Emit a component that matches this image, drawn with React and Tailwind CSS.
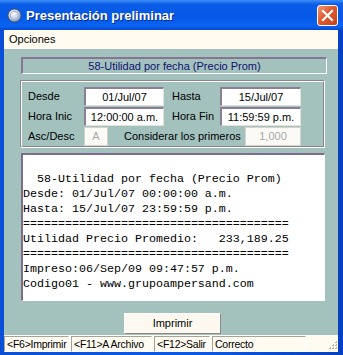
import React from "react";

const sunkenInput =
  "h-[19px] flex items-center justify-center bg-white border-t-2 border-l-2 border-r border-b border-t-[#8b7f96] border-l-[#8b7f96] border-r-[#e4e1da] border-b-[#e4e1da] text-[11px] text-black";
const disabledInput =
  "h-[19px] flex items-center justify-center bg-[#fbfaf6] border border-[#d6d3cb] text-[11px] text-[#a8a8a8]";

function Label({ w, children, cls = "" }) {
  return <div className={`text-[11px] text-black leading-none ${w} ${cls}`}>{children}</div>;
}

function StatusPanel({ w, children }) {
  return (
    <div className={`${w} h-full flex items-center pl-[2px] border-t border-l border-t-[#a5a39d] border-l-[#a5a39d] border-r border-b border-r-white border-b-white text-[10.5px] tracking-[-0.25px] leading-none whitespace-nowrap overflow-hidden`}>
      {children}
    </div>
  );
}

export default function App() {
  const lines = [
    "",
    "  58-Utilidad por fecha (Precio Prom)",
    "Desde: 01/Jul/07 00:00:00 a.m.",
    "Hasta: 15/Jul/07 23:59:59 p.m.",
    "======================================",
    "Utilidad Precio Promedio:   233,189.25",
    "======================================",
    "Impreso:06/Sep/09 09:47:57 p.m.",
    "Codigo01 - www.grupoampersand.com",
  ];
  return (
    <div className="w-[343px] h-[355px] flex flex-col overflow-hidden bg-[linear-gradient(90deg,#0a4fd6,#0a58e8_40%,#0a58e8_60%,#0640c0)] font-['Liberation_Sans',Arial,sans-serif]">
      {/* Title bar */}
      <div className="h-[30px] shrink-0 flex items-center bg-[linear-gradient(180deg,#3d8ef6_0%,#0b5de8_14%,#0558e6_55%,#0a63f2_86%,#0449d2_100%)]">
        <div className="ml-[7px] w-[15px] h-[15px]">
          <svg width="15" height="15" viewBox="0 0 15 15">
            <defs>
              <radialGradient id="orb" cx="0.4" cy="0.35" r="0.7">
                <stop offset="0" stopColor="#ffffff" />
                <stop offset="0.5" stopColor="#c9d4e6" />
                <stop offset="1" stopColor="#7e93bb" />
              </radialGradient>
            </defs>
            <circle cx="7.5" cy="7.5" r="6.6" fill="url(#orb)" stroke="#3e4f78" strokeWidth="1" />
            <circle cx="7.5" cy="7.5" r="4.2" fill="none" stroke="#9fb0cf" strokeWidth="1" />
          </svg>
        </div>
        <div className="ml-[4px] text-white font-bold text-[13px] leading-none [text-shadow:1px_1px_0_#0a2a8a] whitespace-nowrap">
          Presentación preliminar
        </div>
        <div className="ml-auto mr-[5px] w-[21px] h-[21px] rounded-[3px] border border-white bg-[linear-gradient(135deg,#f09878,#e05a30_45%,#c8401a)] flex items-center justify-center">
          <svg width="13" height="13" viewBox="0 0 13 13">
            <path d="M2 2 L11 11 M11 2 L2 11" stroke="white" strokeWidth="2.2" strokeLinecap="square" />
          </svg>
        </div>
      </div>

      {/* Client area */}
      <div className="flex-1 flex flex-col ml-[4px] mr-[5px] mb-[3px] bg-[#a3c2be] min-h-0">
        {/* Menu */}
        <div className="h-[19px] shrink-0 bg-[#fffbf0] flex items-center pl-[5px] text-[11px] text-black leading-none">
          Opciones
        </div>

        {/* Body */}
        <div className="flex-1 flex flex-col pt-[8px]">
          <div className="ml-[17px] w-[306px] h-[17px] flex items-center justify-center border-t-2 border-l-2 border-t-[#857693] border-l-[#857693] border-r border-b border-r-white border-b-white text-[11px] text-[#101070] leading-none">
            58-Utilidad por fecha (Precio Prom)
          </div>

          {/* Group box */}
          <div className="mt-[6px] ml-[16px] w-[305px] h-[68px] border-t border-l border-t-[#888888] border-l-[#888888] border-r border-b border-r-white border-b-white">
            <div className="w-full h-full border-t border-l border-t-white border-l-white border-r border-b border-r-[#888888] border-b-[#888888] pt-[5px] pl-[6px] flex flex-col gap-[1px]">
              <div className="flex items-center h-[19px]">
                <Label w="w-[56px]">Desde</Label>
                <div className={`${sunkenInput} w-[80px]`}>01/Jul/07</div>
                <Label w="w-[48px]" cls="ml-[8px]">Hasta</Label>
                <div className={`${sunkenInput} w-[81px]`}>15/Jul/07</div>
              </div>
              <div className="flex items-center h-[19px]">
                <Label w="w-[56px]">Hora Inic</Label>
                <div className={`${sunkenInput} w-[80px]`}>12:00:00 a.m.</div>
                <Label w="w-[48px]" cls="ml-[8px]">Hora Fin</Label>
                <div className={`${sunkenInput} w-[81px]`}>11:59:59 p.m.</div>
              </div>
              <div className="flex items-center h-[19px]">
                <Label w="w-[56px]">Asc/Desc</Label>
                <div className={`${disabledInput} w-[24px]`}>A</div>
                <Label w="w-[121px]" cls="ml-[16px]">Considerar los primeros</Label>
                <div className={`${disabledInput} w-[56px]`}>1,000</div>
              </div>
            </div>
          </div>

          {/* Text area */}
          <div className="mt-[5px] ml-[17px] w-[304px] h-[148px] bg-white border-t-2 border-l-2 border-t-[#7d6d8c] border-l-[#7d6d8c] border-r border-b border-r-white border-b-white pt-[2px] pl-[0px] overflow-hidden">
            {lines.map((l, i) => (
              <div key={i} className="h-[15px] leading-[15px] whitespace-pre text-[11.67px] text-black font-['Liberation_Mono','Courier_New',monospace]">
                {l || "\u00a0"}
              </div>
            ))}
          </div>

          {/* Button */}
          <div className="mt-[12px] ml-[120px] w-[97px] h-[21px] flex items-center justify-center bg-[#fdf9f1] border-t border-l border-t-white border-l-white border-r border-b border-r-[#8c8a84] border-b-[#8c8a84] text-[11px] text-black leading-none">
            Imprimir
          </div>

          {/* Status bar */}
          <div className="mt-auto h-[17px] bg-[#fffbf0] flex items-stretch gap-[2px] pt-[1px] relative">
            <StatusPanel w="w-[65px]">&lt;F6&gt;Imprimir</StatusPanel>
            <StatusPanel w="w-[81px]">&lt;F11&gt;A Archivo</StatusPanel>
            <StatusPanel w="w-[56px]">&lt;F12&gt;Salir</StatusPanel>
            <StatusPanel w="w-[94px]">Correcto</StatusPanel>
            <div className="absolute right-[1px] bottom-[1px]">
              <svg width="11" height="11" viewBox="0 0 11 11">
                {[
                  [9, 1], [9, 4], [6, 4], [9, 7], [6, 7], [3, 7],
                ].map(([x, y], i) => (
                  <g key={i}>
                    <rect x={x} y={y} width="2" height="2" fill="#b8b4aa" />
                    <rect x={x} y={y} width="1" height="1" fill="#ffffff" />
                  </g>
                ))}
              </svg>
            </div>
          </div>
        </div>
      </div>
    </div>
  );
}
